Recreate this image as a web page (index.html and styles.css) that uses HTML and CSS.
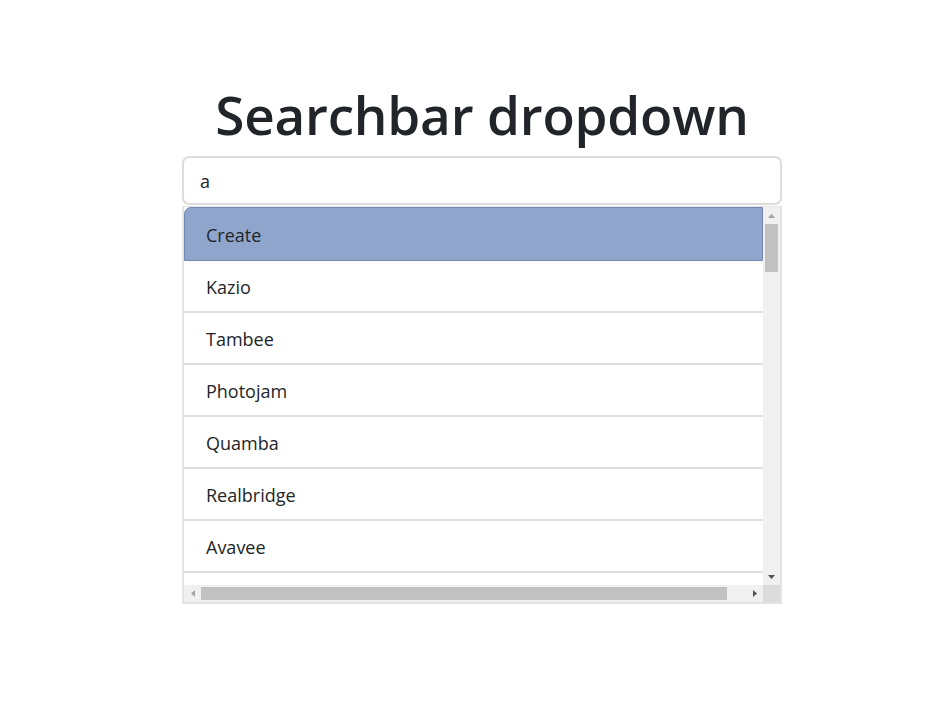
FILE: index.html
```html
<!DOCTYPE html>
<html lang="en">
<head>
<meta charset="utf-8">
<title>Searchbar dropdown</title>
<link rel="stylesheet" href="styles.css">
</head>
<body>
<main class="page">
  <h1 class="title">Searchbar dropdown</h1>
  <div class="search">
    <input class="search-input" type="text" value="a">
    <div class="dropdown">
      <div class="viewport">
        <ul class="options">
          <li class="option active">Create</li>
          <li class="option">Kazio</li>
          <li class="option">Tambee</li>
          <li class="option">Photojam</li>
          <li class="option">Quamba</li>
          <li class="option">Realbridge</li>
          <li class="option">Avavee</li>
          <li class="option"></li>
        </ul>
      </div>
      <div class="vbar">
        <span class="sb-btn">
          <svg width="7" height="4" viewBox="0 0 7 4"><path d="M0 4 L3.5 0 L7 4 Z" fill="#a3a3a3"/></svg>
        </span>
        <span class="vtrack"><span class="vthumb"></span></span>
        <span class="sb-btn">
          <svg width="7" height="4" viewBox="0 0 7 4"><path d="M0 0 L7 0 L3.5 4 Z" fill="#505050"/></svg>
        </span>
      </div>
      <div class="hbar">
        <span class="sb-btn">
          <svg width="4" height="7" viewBox="0 0 4 7"><path d="M4 0 L4 7 L0 3.5 Z" fill="#a3a3a3"/></svg>
        </span>
        <span class="htrack"><span class="hthumb"></span></span>
        <span class="sb-btn">
          <svg width="4" height="7" viewBox="0 0 4 7"><path d="M0 0 L4 3.5 L0 7 Z" fill="#505050"/></svg>
        </span>
      </div>
      <div class="corner"></div>
    </div>
  </div>
</main>
</body>
</html>
```
FILE: styles.css
```css
html, body {
  margin: 0;
  padding: 0;
  background: #ffffff;
}

body {
  font-family: "Open Sans", "Noto Sans", "Liberation Sans", sans-serif;
  color: #212529;
}

.page {
  width: 600px;
  margin: 0 0 0 182px;
  padding-top: 80px;
}

.title {
  margin: 0 0 6px;
  font-size: 53px;
  font-weight: 600;
  line-height: 70px;
  text-align: center;
  color: #212529;
  letter-spacing: -0.2px;
}

.search {
  display: flex;
  flex-direction: column;
  gap: 1px;
}

.search-input {
  display: block;
  box-sizing: border-box;
  width: 600px;
  height: 49px;
  margin: 0;
  padding: 0 16px;
  border: 2px solid #dcdcdc;
  border-radius: 7px;
  font-family: inherit;
  font-size: 18px;
  color: #212529;
  outline: none;
  background: #fff;
}

.dropdown {
  box-sizing: border-box;
  width: 600px;
  height: 398px;
  border: 2px solid #e3e3e3;
  border-top-width: 1px;
  display: grid;
  grid-template-columns: 1fr 17px;
  grid-template-rows: 1fr 17px;
  background: #fff;
}

.viewport {
  overflow: hidden;
  min-width: 0;
  min-height: 0;
}

.options {
  list-style: none;
  margin: 0;
  padding: 0;
}

.option {
  box-sizing: border-box;
  height: 52px;
  padding: 2px 22px 0;
  display: flex;
  align-items: center;
  font-size: 18px;
  color: #212529;
  border-bottom: 2px solid #dedede;
  white-space: nowrap;
}

.option.active {
  background: #8fa5cc;
  border: 1px solid #7389b2;
  border-top-left-radius: 7px;
  height: 54px;
  padding-left: 21px;
  padding-top: 2px;
}

.sb-btn {
  width: 17px;
  height: 17px;
  flex: none;
  display: flex;
  align-items: center;
  justify-content: center;
  background: #f0f0f0;
}

.vbar {
  display: flex;
  flex-direction: column;
  background: #f0f0f0;
}

.vtrack {
  flex: 1;
  display: flex;
  flex-direction: column;
  padding: 0 2px;
}

.vthumb {
  height: 48px;
  background: #c1c1c1;
}

.hbar {
  display: flex;
  background: #f0f0f0;
}

.htrack {
  flex: 1;
  display: flex;
  align-items: center;
  padding: 0;
}

.hthumb {
  width: 526px;
  height: 13px;
  background: #c1c1c1;
}

.corner {
  background: #dcdcdc;
}
```
